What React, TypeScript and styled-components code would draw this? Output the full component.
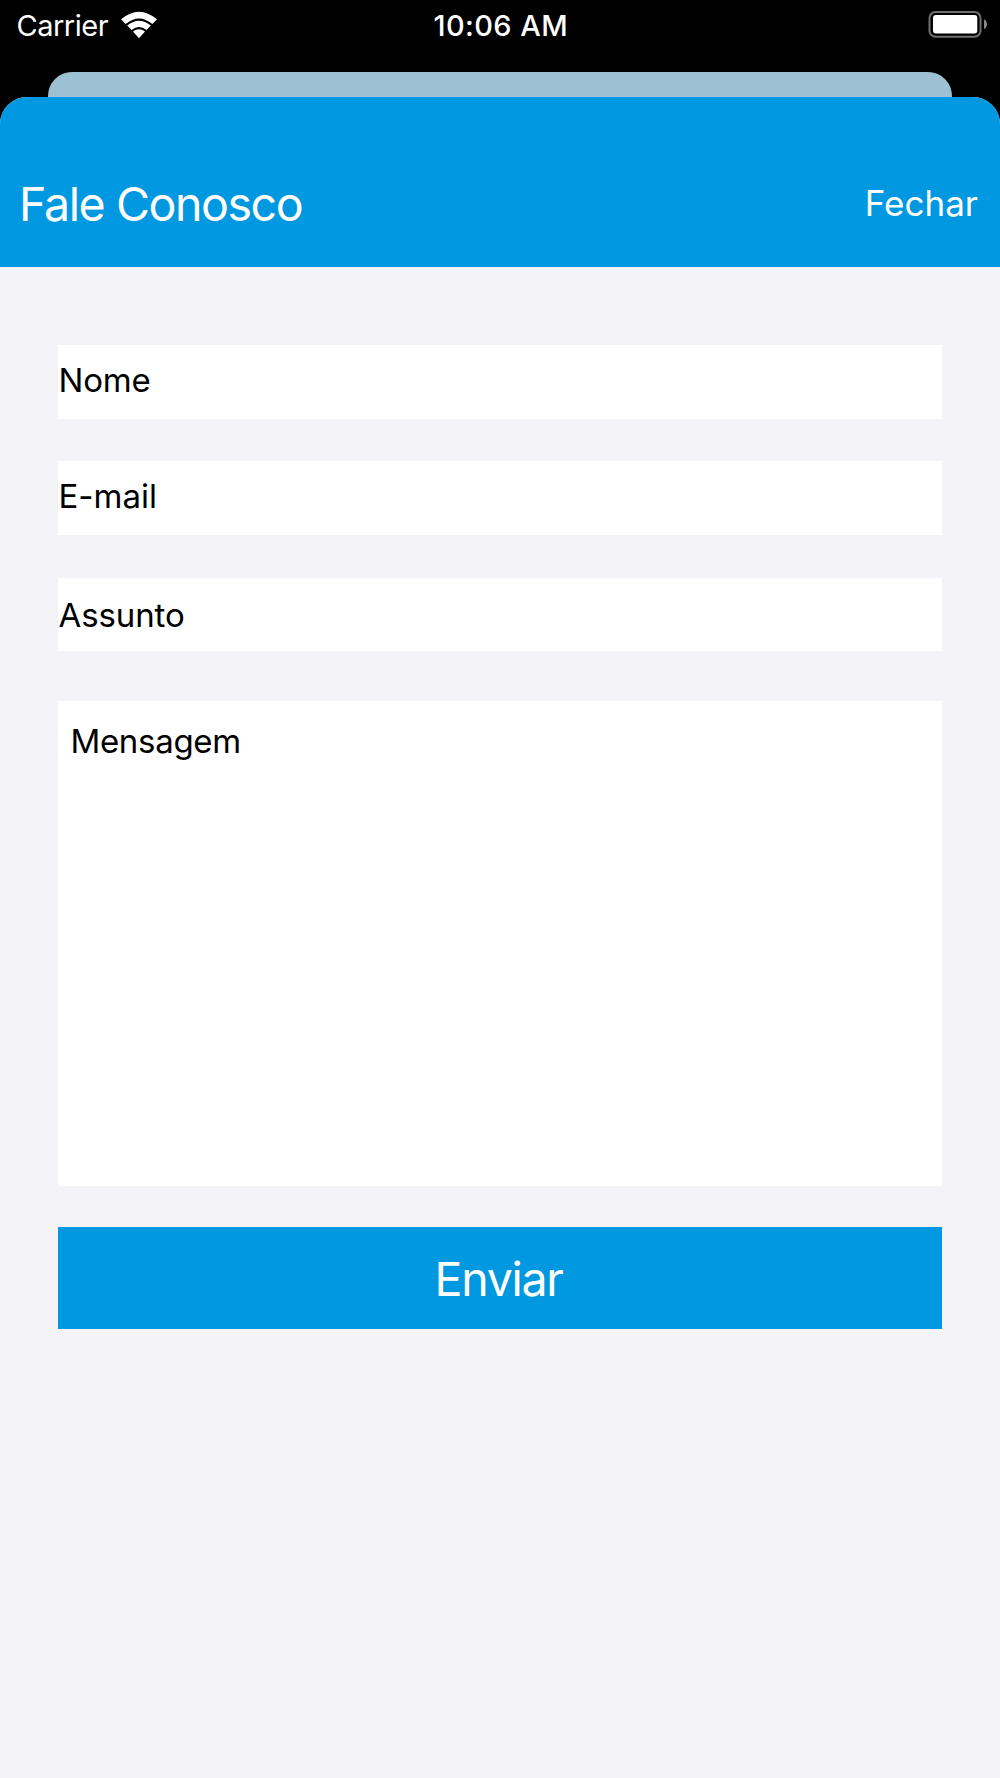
import React from "react";
import styled, { createGlobalStyle } from "styled-components";

const BLUE = "#0099e1";

const GlobalStyle = createGlobalStyle`
  * { box-sizing: border-box; }
  body { margin: 0; background: #000; font-family: Inter, "Liberation Sans", sans-serif; }
`;

const Screen = styled.div`
  width: 1000px;
  height: 1778px;
  display: flex;
  flex-direction: column;
  background: #000;
  overflow: hidden;
`;

const StatusBar = styled.div`
  height: 72.4px;
  flex: none;
  display: grid;
  grid-template-columns: 1fr auto 1fr;
  align-items: start;
  padding: 6px 12px 0 16.5px;
  color: #fff;
`;

const Carrier = styled.div`
  display: flex;
  align-items: center;
  gap: 12px;
  height: 40px;
`;

const Label = styled.span<{ $size: number; $spacing?: number; $weight?: number; $line?: number }>`
  font-size: ${(p) => p.$size}px;
  letter-spacing: ${(p) => p.$spacing ?? 0}px;
  font-weight: ${(p) => p.$weight ?? 400};
  line-height: ${(p) => p.$line ?? 40}px;
  white-space: nowrap;
`;

const Clock = styled(Label)`
  margin-right: 3px;
`;

const WifiIcon = styled.svg`
  display: block;
  margin-top: -3px;
`;

const BatterySlot = styled.div`
  display: flex;
  justify-content: flex-end;
  padding-top: 4px;
`;

const BackSheet = styled.div`
  flex: none;
  height: 24.6px;
  margin: 0 48.5px 0 48.3px;
  border-radius: 24px 24px 0 0;
  background: #9bc1d3;
`;

const Sheet = styled.main`
  flex: 1;
  display: flex;
  flex-direction: column;
  background: #f3f3f8;
  border-radius: 27px 27px 0 0;
  overflow: hidden;
`;

const Header = styled.header`
  flex: none;
  height: 170px;
  display: flex;
  justify-content: space-between;
  align-items: flex-start;
  padding: 77px 22px 0 19px;
  background: ${BLUE};
  color: #fff;
`;

const Title = styled.h1`
  margin: 0;
  font-size: 46.5px;
  font-weight: 400;
  line-height: 60px;
  letter-spacing: -1.4px;
`;

const CloseButton = styled.button`
  border: 0;
  padding: 0;
  margin-top: -1px;
  background: none;
  color: inherit;
  font: 400 35px/60px Inter, sans-serif;
  letter-spacing: 0;
`;

const Form = styled.form`
  display: flex;
  flex-direction: column;
  padding: 78px 58px 0;
`;

const Field = styled.label<{ $height: number; $gap: number; $lift?: number; $drop?: number }>`
  display: flex;
  align-items: center;
  height: ${(p) => p.$height}px;
  margin-bottom: ${(p) => p.$gap}px;
  padding: ${(p) => p.$drop ?? 0}px 0 ${(p) => p.$lift ?? 0}px 0.5px;
  background: #fff;
  color: #000;
`;

const Message = styled.label`
  display: flex;
  align-items: flex-start;
  height: 485px;
  padding: 20px 12.4px;
  background: #fff;
  color: #000;
`;

const SubmitButton = styled.button`
  height: 102.4px;
  margin-top: 41px;
  border: 0;
  padding: 1px 3px 0 0;
  background: ${BLUE};
  color: #fff;
  font: 400 46.5px/60px Inter, sans-serif;
  letter-spacing: -1.3px;
`;

const Wifi = () => (
  <WifiIcon width="38" height="28" viewBox="0 0 38 28" fill="#fff">
    <path d="M1 8.3 Q19-7 37 8.3L32.4 13.1Q19 1.8 5.6 13.1Z" />
    <path d="M7.2 14.6Q19 4.8 30.8 14.6L26.5 19Q19 12.8 11.5 19Z" />
    <path d="M13 20.6Q19 16 25 20.6L19 27.2Z" />
  </WifiIcon>
);

const Battery = () => (
  <svg width="60" height="28" viewBox="0 0 60 28">
    <rect x="1.5" y="2" width="51" height="24.8" rx="6" fill="none" stroke="#6f6f6f" strokeWidth="2" />
    <rect x="5" y="5" width="44.3" height="18.5" rx="3" fill="#fff" />
    <path d="M56 9.3C60 11.2 60 17.2 56 19.2Z" fill="#8a8a8a" />
  </svg>
);

export default function App() {
  return (
    <Screen>
      <GlobalStyle />
      <StatusBar>
        <Carrier>
          <Label $size={29} $spacing={-0.5}>Carrier</Label>
          <Wifi />
        </Carrier>
        <Clock $size={29} $weight={500} $spacing={0.4}>10:06 AM</Clock>
        <BatterySlot>
          <Battery />
        </BatterySlot>
      </StatusBar>
      <BackSheet />
      <Sheet>
        <Header>
          <Title>Fale Conosco</Title>
          <CloseButton type="button">Fechar</CloseButton>
        </Header>
        <Form>
          <Field $height={74} $gap={42} $lift={3.2}>
            <Label $size={33} $spacing={-0.2}>Nome</Label>
          </Field>
          <Field $height={74} $gap={43} $lift={3.2}>
            <Label $size={33}>E-mail</Label>
          </Field>
          <Field $height={73} $gap={50} $drop={2}>
            <Label $size={33} $spacing={-0.1}>Assunto</Label>
          </Field>
          <Message>
            <Label $size={33} $spacing={-0.3}>Mensagem</Label>
          </Message>
          <SubmitButton type="button">Enviar</SubmitButton>
        </Form>
      </Sheet>
    </Screen>
  );
}
